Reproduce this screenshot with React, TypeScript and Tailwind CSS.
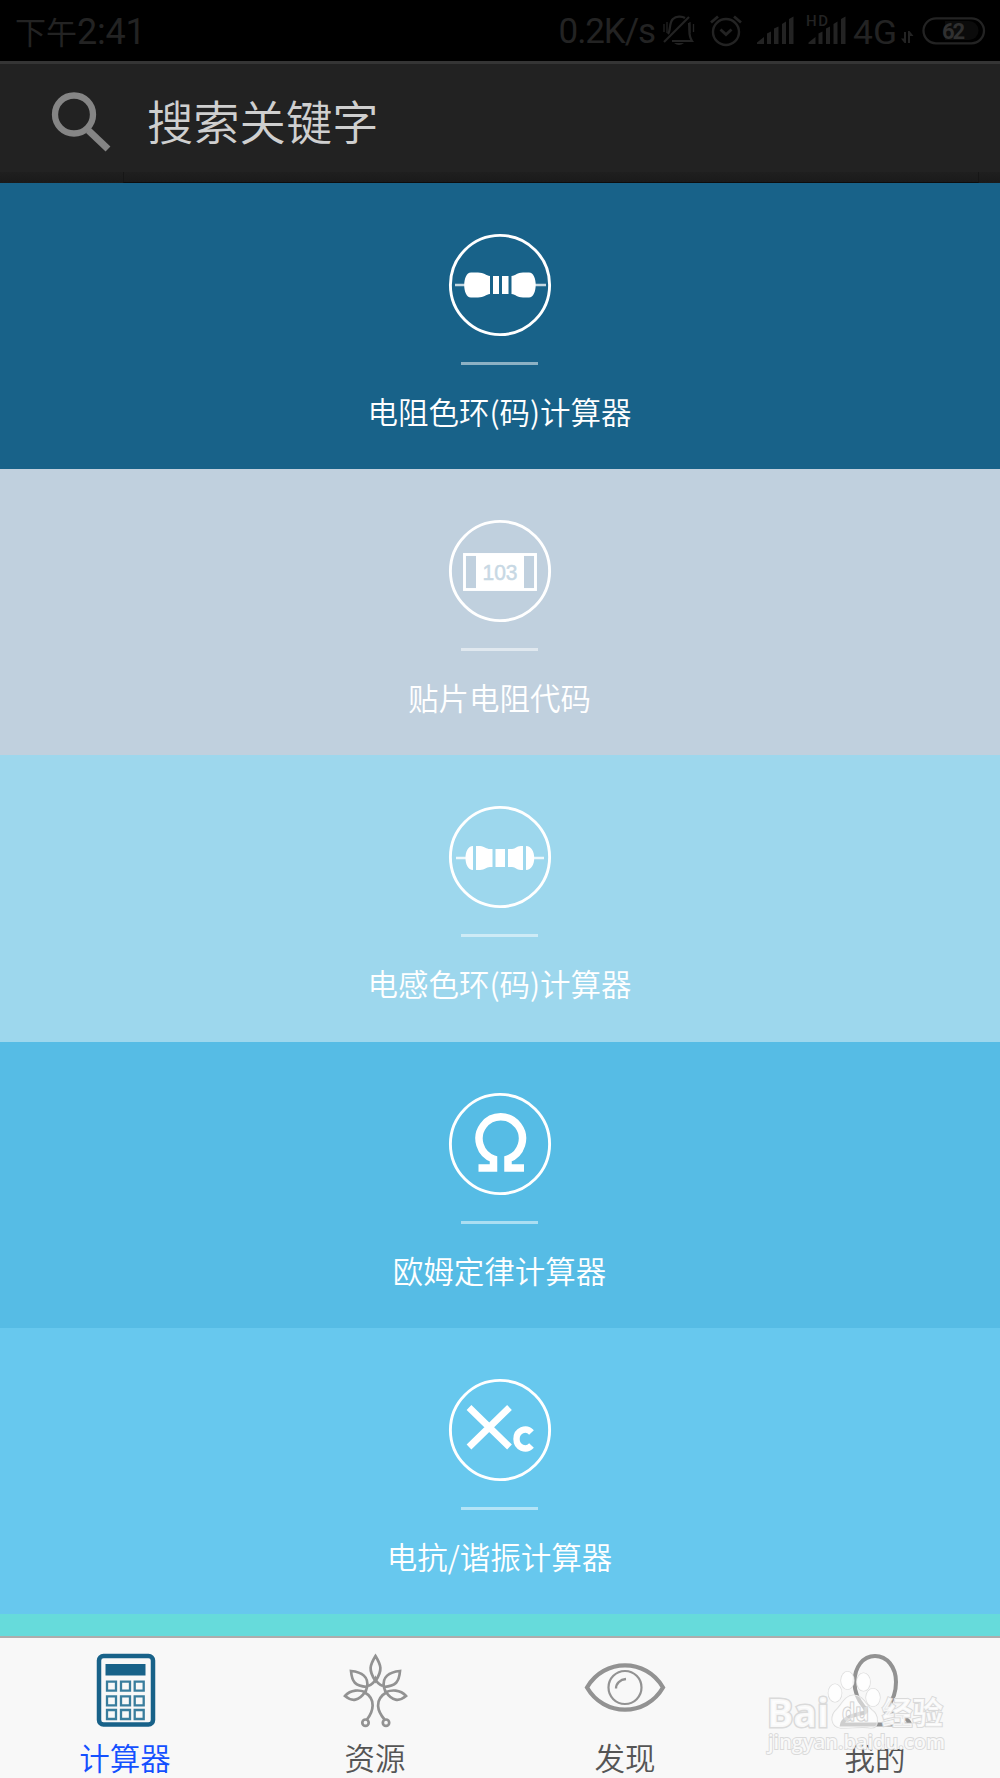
import type { ReactNode } from "react";

function StatusBar() {
  return (
    <div className="flex h-[61px] items-start bg-black pl-[15px] text-[#232323]">
      <div className="flex h-[61px] w-[645px] items-start justify-between whitespace-nowrap">
        <div className="flex items-baseline">
          <span className="mt-[9px] text-[31px] leading-[44px]">下午</span>
          <span className="font-[Roboto] text-[36px] leading-[44px] tracking-[-0.2px]">2:41</span>
        </div>
        <span className="mt-[10px] mr-[5px] font-[Roboto] text-[35px] leading-[44px] tracking-[-1.1px]">0.2K/s</span>
      </div>
      <svg width="340" height="61" viewBox="660 0 340 61" fill="none" stroke="#232323" strokeWidth="2.2" className="shrink-0">
        <path d="M664 42 689 17" />
        <path d="M668 34c3-4 1-12 5-15 3-3 9-3 12-1M689 23c1 9-1 12 3 18H672" />
        <path d="M674 43h10q-5 4-10 0z" fill="#232323" stroke="none" />
        <path d="M664 24v8M667 22v11M690 22v11M693.500 24v8" strokeWidth="1.300" />
        <circle cx="726" cy="32" r="13" strokeWidth="2.400" />
        <path d="M720.500 29.500 726 34.500 731.500 29.500M711 22.500 718 16.500M741 22.500 734 16.500" strokeWidth="2.800" />
        <g fill="#232323" stroke="none">
          <path d="M757 42.500 764 37v7h-7zM767 33.500 771 31.500V44h-4zM774 28.500 778.500 26.500V44H774zM782 24 786 21.500V44h-4zM789 19 793.500 16.500V44H789z" />
          <path d="M808.500 42.500 815.500 37v7h-7zM818.500 33.500 822.500 31.500V44h-4zM826 28.500 830 26.500V44h-4zM833.500 24 837.500 21.500V44h-4zM841 19 845.500 16.500V44H841z" />
          <text x="806" y="26" fontFamily="Roboto" fontSize="15" fontWeight="500" textLength="22">HD</text>
          <text x="853" y="44" fontFamily="Roboto" fontSize="34" textLength="44" lengthAdjust="spacingAndGlyphs">4G</text>
          <path d="M901 38.500h3V32h2v11h-1.500zM908 31h1.500l4 5H910v7h-2z" />
        </g>
        <rect x="923.500" y="18.300" width="60.500" height="25" rx="12.500" strokeWidth="2.300" />
        <path d="M945 21h24a9.500 9.500 0 0 1 0 19h-24z" fill="#0b0b0b" stroke="none" />
        <text x="953.500" y="38.500" textAnchor="middle" fill="#303030" stroke="none" fontFamily="Roboto" fontSize="22" fontWeight="700" textLength="23">62</text>
      </svg>
    </div>
  );
}

function SearchBar() {
  return (
    <div className="flex h-[122px] flex-col border-t-[3px] border-[#353535] bg-[#222222]">
      <div className="flex h-[108px] shrink-0 items-center pt-[7px] pl-[50px]">
        <svg width="64" height="64" viewBox="50 90 64 64" fill="none" stroke="#858585" className="shrink-0">
          <circle cx="74" cy="114.500" r="19" strokeWidth="6.300" />
          <path d="M88.500 130.500 108 149" strokeWidth="7" />
        </svg>
        <span className="-mt-[3px] ml-[33px] text-[46.3px] leading-[60px] font-[350] text-[#cfcfcf]">搜索关键字</span>
      </div>
      <div className="flex h-[11px] bg-linear-to-b from-[#1f1f1f] to-[#1a1a1a]">
        <div className="w-[123px]" />
        <div className="w-[856px] border-x border-b border-x-[#161616] border-b-[#0d0d0d]" />
      </div>
    </div>
  );
}

function Panel({ tone, label, children }: { tone: string; label: string; children: ReactNode }) {
  return (
    <div className={`flex h-[286.2px] shrink-0 flex-col items-center text-white ${tone}`}>
      <svg width="104" height="104" viewBox="-52 -52 104 104" fill="white" className="mt-[50px] shrink-0">
        <circle r="49.600" fill="none" stroke="white" strokeWidth="2.900" />
        {children}
      </svg>
      <div className="mt-[25px] mr-[1px] h-[3px] w-[77px] shrink-0 bg-white/50" />
      <div className="mt-[23px] mr-[1px] text-[30.5px] leading-[46px] font-[350] whitespace-nowrap">{label}</div>
    </div>
  );
}

function Tab({ label, active, children }: { label: string; active?: boolean; children: ReactNode }) {
  return (
    <div className="flex flex-1 flex-col items-center">
      <svg width="84" height="76" viewBox="-42 -38 84 76" fill="none" stroke="#929292" className="mt-[14px] shrink-0">
        {children}
      </svg>
      <span className={`mt-[12px] text-[30.5px] leading-[34px] font-[350] ${active ? "text-[#1450ff]" : "text-[#555555]"}`}>{label}</span>
    </div>
  );
}

function Watermark() {
  return (
    <svg className="absolute right-0 bottom-0" width="250" height="118" viewBox="750 1660 250 118" fill="white" fillOpacity="0.82" stroke="#dadada" strokeWidth="1.200" paintOrder="stroke">
      <g fontFamily="Open Sans" fontWeight="700">
        <text x="767" y="1727" fontSize="39" strokeWidth="3" textLength="62" lengthAdjust="spacingAndGlyphs">Bai</text>
        <ellipse cx="835" cy="1693" rx="6.700" ry="9" />
        <ellipse cx="847.500" cy="1680.500" rx="6.500" ry="9" />
        <ellipse cx="863.500" cy="1682" rx="6.700" ry="9" />
        <ellipse cx="873" cy="1697.500" rx="7" ry="9" />
        <path d="M854 1695c-9 0-12 9-17 14-7 6-7 17 3 19 8 1 22-2 31 0 9 0 8-13 1-18-6-5-9-15-18-15z" fillOpacity="0.550" />
        <text x="842" y="1721" fontSize="25" fillOpacity="0.350" stroke="#cccccc" textLength="27" lengthAdjust="spacingAndGlyphs">du</text>
      </g>
      <text x="882" y="1724" fontFamily="Noto Sans CJK SC" fontSize="30.500" fontWeight="700" strokeWidth="2">经验</text>
      <text x="768" y="1749" fontFamily="Open Sans" fontSize="20" fontWeight="600" strokeWidth="1.800" textLength="177" lengthAdjust="spacingAndGlyphs">jingyan.baidu.com</text>
    </svg>
  );
}

export default function App() {
  return (
    <div className="relative flex h-[1778px] w-[1000px] flex-col overflow-hidden bg-[#66dbdb] font-['Noto_Sans_CJK_SC',sans-serif] font-normal">
      <StatusBar />
      <SearchBar />
      <main className="flex h-[1453px] shrink-0 flex-col overflow-hidden">
        <Panel tone="bg-[#186289]" label="电阻色环(码)计算器">
          <path d="M-45 0h12M34 0h12" stroke="#c5d8e1" strokeWidth="2.600" />
          <path d="M-29-12.500h7c6 0 8 3 12 3.500V9c-4 .5-6 3.500-12 3.500h-7c-9 0-9-25 0-25z" />
          <path d="M29-12.500h-6c-6 0-7 3-11.500 3.500V9c4.500.5 5.500 3.500 11.500 3.500h6c9 0 9-25 0-25z" />
          <path d="M-7-9H-1V9h-6zM2-9h6.500V9H2z" />
        </Panel>
        <Panel tone="bg-[#c0d0de]" label="贴片电阻代码">
          <rect x="-35.500" y="-16.500" width="71" height="35" fill="none" stroke="white" strokeWidth="2.900" />
          <path d="M-24-17h48v36h-48z" />
          <text x="0" y="8.500" textAnchor="middle" fontFamily="Liberation Sans" fontSize="22" textLength="35" lengthAdjust="spacingAndGlyphs" fill="#c7d8e4" stroke="#c7d8e4" strokeWidth="0.500">103</text>
        </Panel>
        <Panel tone="bg-[#9dd7ed]" label="电感色环(码)计算器">
          <path d="M-44 1h11M34 1h10" stroke="#edf8fc" strokeWidth="2.400" />
          <path d="M-27-11V13c-10 0-10-24 0-24zM26-11V13c11 0 11-24 0-24z" />
          <path d="M-24-11h4c5 .5 6 3 10 3h2.500V10H-10c-4 0-5 3-10 3h-4zM8-8h4c4 0 4-3 9-3h2v24h-2c-5 0-5-3-9-3H8zM-4.500-8H5v18h-9.500z" />
        </Panel>
        <Panel tone="bg-[#56bce5]" label="欧姆定律计算器">
          <path d="M-21.500 24H-6.500V15A21.700 21.700 0 1 1 8 15V24H24" fill="none" stroke="white" strokeWidth="7.500" />
        </Panel>
        <Panel tone="bg-[#67c8ee]" label="电抗/谐振计算器">
          <path d="M-31-22.500 9.500 17M9.500-22.500-31 17" fill="none" stroke="white" strokeWidth="6.800" />
          <path d="M31.500 2.500C26-3.500 16.500.5 16.500 9S26 21.500 31.500 15.500" fill="none" stroke="white" strokeWidth="6.400" />
        </Panel>
      </main>
      <nav className="flex h-[142px] shrink-0 border-t-[2px] border-[#adadad] bg-[#f8f8f8]">
        <Tab label="计算器" active>
          <rect x="-26" y="-34" width="54" height="68.500" rx="4.500" stroke="#186289" strokeWidth="4.500" />
          <path d="M-19.500-26h40v11.500h-40z" fill="#186289" stroke="none" />
          <g stroke="#397d9d" strokeWidth="2.300">
            <path d="M-18-8.300h9v9h-9zM-4-8.300h9v9h-9zM9.700-8.300h9v9h-9z" />
            <path d="M-18 6.300h9v9h-9zM-4 6.300h9v9h-9zM9.700 6.300h9v9h-9z" />
            <path d="M-18 20h9v9h-9zM-4 20h9v9h-9zM9.700 20h9v9h-9z" />
          </g>
        </Tab>
        <Tab label="资源">
          <g strokeWidth="2.700">
            <path d="M.5-34C-5-25-7-20 .5-9 8-20 6-25 .5-34zM-7-4C-4-5-1-7 .5-11 2-7 5-5 8-4" />
            <path d="M-24-19c1 11 4 15 16 16 2-10-5-15-16-16zM25-19C24-8 21-4 9-3 7-13 14-18 25-19zM-8-3-9.500 2M9-3 10.500 2" />
            <path d="M-30 6c6-7 15-6 20-4-6 9-13 10-20 4zM31 6C25-1 16 0 11 2c6 9 13 10 20 4z" />
            <path d="M-11 2C2 9-2 22-8 29.500M12 2C-2 10 3 22 9.500 29.500" />
            <circle cx="-9.500" cy="32.700" r="3.200" />
            <circle cx="11" cy="32.700" r="3.200" />
          </g>
        </Tab>
        <Tab label="发现">
          <path d="M-38-2.500C-21-32 21-32 38-2.500 21 27-21 27-38-2.500z" strokeWidth="4.200" />
          <circle cx="0" cy="-2.500" r="16.500" strokeWidth="2.200" />
          <path d="M-9-1.500c0-5 4-9 10-9.500" strokeWidth="2.300" />
        </Tab>
        <Tab label="我的">
          <path d="M-12 23c4-1 4-2 1-6C-18 9-20.500 1-20.500-8-20.500-23-12-34 0-34S21-23 21-8C21 1 18 10 13 16 10 20 9 22 13 23 25 25 34 28 35 34.500H-33C-32 28-22 25-12 23z" strokeWidth="4" />
        </Tab>
      </nav>
      <Watermark />
    </div>
  );
}
